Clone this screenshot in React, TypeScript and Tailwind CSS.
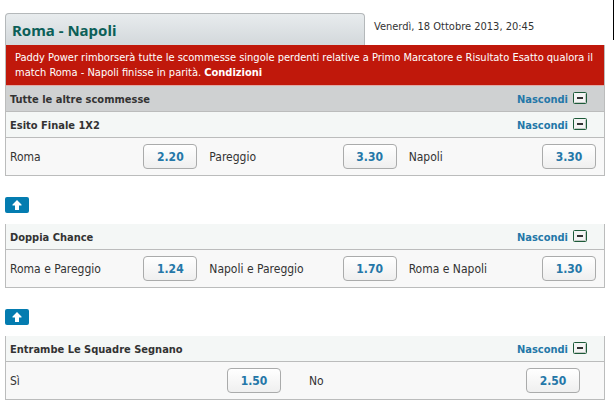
import clsx from "clsx";

type Selection = { name: string; odds: string };

const finale: Selection[] = [
  { name: "Roma", odds: "2.20" },
  { name: "Pareggio", odds: "3.30" },
  { name: "Napoli", odds: "3.30" },
];

const doppia: Selection[] = [
  { name: "Roma e Pareggio", odds: "1.24" },
  { name: "Napoli e Pareggio", odds: "1.70" },
  { name: "Roma e Napoli", odds: "1.30" },
];

const segnano: Selection[] = [
  { name: "Sì", odds: "1.50" },
  { name: "No", odds: "2.50" },
];

function MinusIcon() {
  return (
    <svg width="14" height="12" viewBox="0 0 14 12" className="mb-1 shrink-0" aria-hidden="true">
      <rect x="0.5" y="0.5" width="13" height="11" rx="1" fill="#f4f4f4" stroke="#1c5a38" />
      <path d="M12.5 1.5V10.5H1.5" fill="none" stroke="#c3cac5" />
      <rect x="4" y="5" width="6" height="2" fill="#333" />
    </svg>
  );
}

function RowHeader({ title, dark }: { title: string; dark?: boolean }) {
  return (
    <div
      className={clsx(
        "flex h-[26px] items-center justify-between border-b border-[#bbbcbc] pl-1 pr-[17px] pt-[2px] text-[11px] font-bold",
        dark ? "bg-[#cfd1d2]" : "bg-[#f4f7f6]"
      )}
    >
      <h2>{title}</h2>
      <button type="button" className="flex items-center gap-[5px] text-[#2477a8]">
        Nascondi
        <MinusIcon />
      </button>
    </div>
  );
}

function Odds({ items }: { items: Selection[] }) {
  const wide = items.length === 2;
  return (
    <div className={clsx("grid bg-[#f8f8f8]", wide ? "grid-cols-2" : "grid-cols-3")}>
      {items.map((item) => (
        <div
          key={item.name}
          className={clsx("flex h-[37px] items-center justify-between pl-1", wide ? "pr-6" : "pr-2")}
        >
          <span className="pt-[2px]">{item.name}</span>
          <button
            type="button"
            aria-label={`${item.name} ${item.odds}`}
            className="h-[25px] w-[54px] rounded border border-[#aaabab] bg-linear-to-b from-white to-[#efefef] pt-[2px] font-bold text-[#2477a8]"
          >
            {item.odds}
          </button>
        </div>
      ))}
    </div>
  );
}

function BackToTop() {
  return (
    <a
      href="#top"
      aria-label="Torna su"
      className="mb-[11px] mt-[21px] flex h-4 w-6 items-center justify-center rounded-xs bg-[#047cb0]"
    >
      <svg width="10" height="10" viewBox="0 0 10 10" aria-hidden="true">
        <path d="M5 0L9.5 4.5V5.5H7V10H3V5.5H0.5V4.5Z" fill="#fff" />
      </svg>
    </a>
  );
}

export default function App() {
  return (
    <main
      id="top"
      className="relative min-h-screen bg-white pb-3 pl-[5px] pr-[9px] pt-[13px] font-['DejaVu_Sans_Condensed','DejaVu_Sans',sans-serif] text-[12px] leading-[15px] text-[#333]"
    >
      <div className="absolute right-0 top-0 h-10 w-px bg-black" />

      <header className="flex h-8">
        <h1 className="w-3/5 rounded-t border border-b-0 border-[#b4b8ba] bg-linear-to-b from-[#e8ecee] to-[#d3d8db] pl-1.5 font-['Noto_Sans',sans-serif] text-[15px] leading-[32px] font-bold text-[#0c5f58]">
          Roma - Napoli
        </h1>
        <p className="pl-[9px] pt-[6px] text-[11px]">Venerdì, 18 Ottobre 2013, 20:45</p>
      </header>

      <section className="border border-t-0 border-[#bbbcbc]">
        <div className="border-b border-[#e0aaa6] bg-[#c0180b] py-[5px] pl-[9px] text-[11px] text-white">
          <p>
            Paddy Power rimborserà tutte le scommesse singole perdenti relative a Primo Marcatore e
            Risultato Esatto qualora il
          </p>
          <p>
            match Roma - Napoli finisse in parità.{" "}
            <a href="#condizioni" className="font-bold">
              Condizioni
            </a>
          </p>
        </div>
        <RowHeader title="Tutte le altre scommesse" dark />
        <RowHeader title="Esito Finale 1X2" />
        <Odds items={finale} />
      </section>

      <BackToTop />
      <section className="border border-t-0 border-[#bbbcbc]">
        <RowHeader title="Doppia Chance" />
        <Odds items={doppia} />
      </section>

      <BackToTop />
      <section className="border border-t-0 border-[#bbbcbc]">
        <RowHeader title="Entrambe Le Squadre Segnano" />
        <Odds items={segnano} />
      </section>
    </main>
  );
}
